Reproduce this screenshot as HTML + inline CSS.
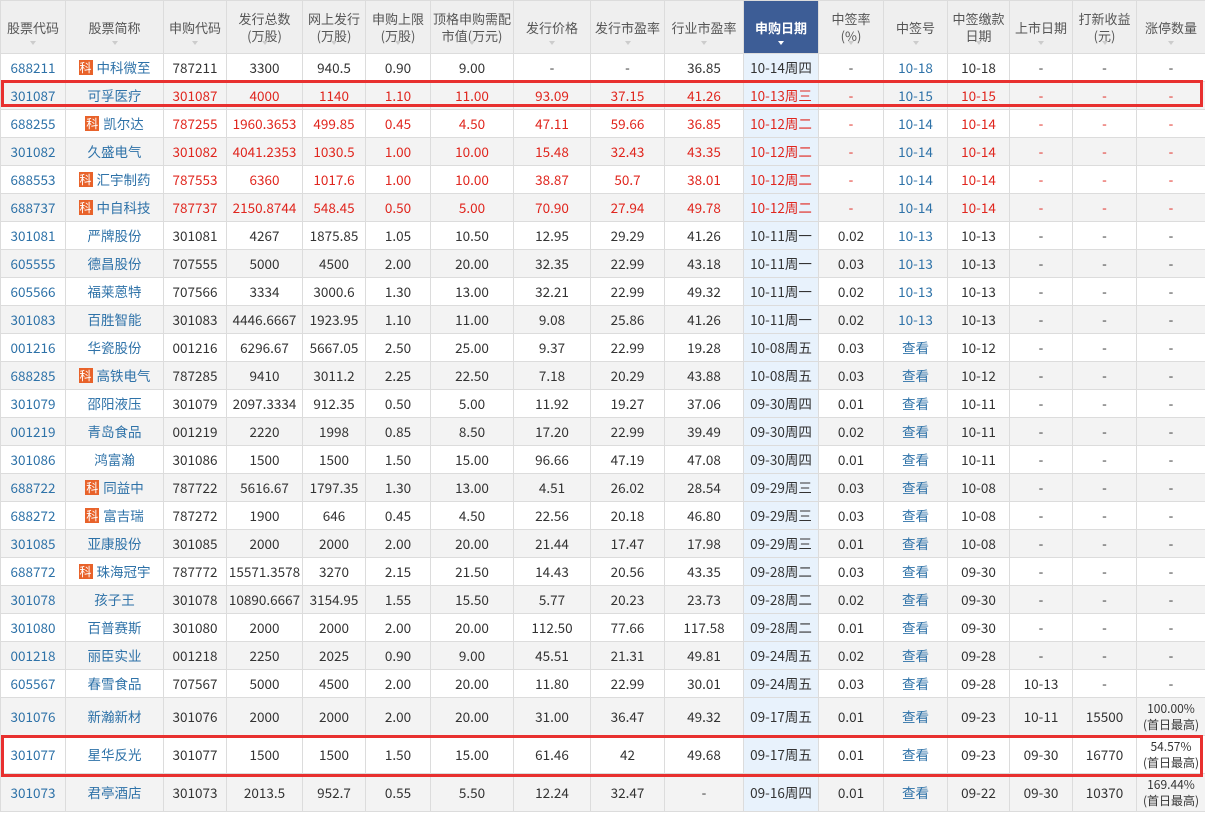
<!DOCTYPE html>
<html><head><meta charset="utf-8"><style>
body{margin:0;background:#fff;font-family:"Noto Sans CJK SC","Liberation Sans",sans-serif;}
table{border-collapse:collapse;table-layout:fixed;width:1205px;font-size:13.5px;color:#333;}
td,th{border:1px solid #dcdcdc;text-align:center;padding:0;white-space:nowrap;overflow:hidden;line-height:18px;vertical-align:middle}
td{padding-bottom:2px}
th{background:#efefef;font-weight:normal;color:#555;height:53px;line-height:17px;position:relative;vertical-align:top;padding-top:9px;box-sizing:border-box;font-size:13px}
th::after{content:"";position:absolute;left:50%;margin-left:-3px;bottom:5px;border:3px solid transparent;border-top:4px solid #ccc;}
th.d{background:#3d5d96;color:#fff;font-weight:bold;}
th.d::after{border-top-color:#fff;}
th.s{padding-top:18px}
tr{height:28px}
tr.t{height:38px}
tr:nth-child(odd) td{background:#f3f3f3}
td.d{background:#e8f2fc!important}
.b{color:#2e72a8}.r{color:#e0261e}
.k{display:inline-block;background:#e8622a;color:#fff;font-size:12px;line-height:15px;width:14px;margin-right:4px;vertical-align:1px}
.box{position:absolute;border:3px solid #e8302f;box-sizing:border-box;}
td.sm{font-size:12px;line-height:16px;padding-bottom:0}
</style></head><body>
<table>
<colgroup><col style="width:65px"><col style="width:98px"><col style="width:63px"><col style="width:76px"><col style="width:63px"><col style="width:65px"><col style="width:83px"><col style="width:77px"><col style="width:74px"><col style="width:79px"><col style="width:75px"><col style="width:65px"><col style="width:64px"><col style="width:62px"><col style="width:63px"><col style="width:64px"><col style="width:69px"></colgroup>
<tr><th class="s">股票代码</th><th class="s">股票简称</th><th class="s">申购代码</th><th>发行总数<br>(万股)</th><th>网上发行<br>(万股)</th><th>申购上限<br>(万股)</th><th>顶格申购需配<br>市值(万元)</th><th class="s">发行价格</th><th class="s">发行市盈率</th><th class="s">行业市盈率</th><th class="d s">申购日期</th><th>中签率<br>(%)</th><th class="s">中签号</th><th>中签缴款<br>日期</th><th class="s">上市日期</th><th>打新收益<br>(元)</th><th class="s">涨停数量</th></tr>
<tr><td class="b">688211</td><td class="b"><span class="k">科</span>中科微至</td><td>787211</td><td>3300</td><td>940.5</td><td>0.90</td><td>9.00</td><td>-</td><td>-</td><td>36.85</td><td class="d">10-14周四</td><td>-</td><td class="b">10-18</td><td>10-18</td><td>-</td><td>-</td><td>-</td></tr>
<tr class="r"><td class="b">301087</td><td class="b">可孚医疗</td><td>301087</td><td>4000</td><td>1140</td><td>1.10</td><td>11.00</td><td>93.09</td><td>37.15</td><td>41.26</td><td class="d">10-13周三</td><td>-</td><td class="b">10-15</td><td>10-15</td><td>-</td><td>-</td><td>-</td></tr>
<tr class="r"><td class="b">688255</td><td class="b"><span class="k">科</span>凯尔达</td><td>787255</td><td>1960.3653</td><td>499.85</td><td>0.45</td><td>4.50</td><td>47.11</td><td>59.66</td><td>36.85</td><td class="d">10-12周二</td><td>-</td><td class="b">10-14</td><td>10-14</td><td>-</td><td>-</td><td>-</td></tr>
<tr class="r"><td class="b">301082</td><td class="b">久盛电气</td><td>301082</td><td>4041.2353</td><td>1030.5</td><td>1.00</td><td>10.00</td><td>15.48</td><td>32.43</td><td>43.35</td><td class="d">10-12周二</td><td>-</td><td class="b">10-14</td><td>10-14</td><td>-</td><td>-</td><td>-</td></tr>
<tr class="r"><td class="b">688553</td><td class="b"><span class="k">科</span>汇宇制药</td><td>787553</td><td>6360</td><td>1017.6</td><td>1.00</td><td>10.00</td><td>38.87</td><td>50.7</td><td>38.01</td><td class="d">10-12周二</td><td>-</td><td class="b">10-14</td><td>10-14</td><td>-</td><td>-</td><td>-</td></tr>
<tr class="r"><td class="b">688737</td><td class="b"><span class="k">科</span>中自科技</td><td>787737</td><td>2150.8744</td><td>548.45</td><td>0.50</td><td>5.00</td><td>70.90</td><td>27.94</td><td>49.78</td><td class="d">10-12周二</td><td>-</td><td class="b">10-14</td><td>10-14</td><td>-</td><td>-</td><td>-</td></tr>
<tr><td class="b">301081</td><td class="b">严牌股份</td><td>301081</td><td>4267</td><td>1875.85</td><td>1.05</td><td>10.50</td><td>12.95</td><td>29.29</td><td>41.26</td><td class="d">10-11周一</td><td>0.02</td><td class="b">10-13</td><td>10-13</td><td>-</td><td>-</td><td>-</td></tr>
<tr><td class="b">605555</td><td class="b">德昌股份</td><td>707555</td><td>5000</td><td>4500</td><td>2.00</td><td>20.00</td><td>32.35</td><td>22.99</td><td>43.18</td><td class="d">10-11周一</td><td>0.03</td><td class="b">10-13</td><td>10-13</td><td>-</td><td>-</td><td>-</td></tr>
<tr><td class="b">605566</td><td class="b">福莱蒽特</td><td>707566</td><td>3334</td><td>3000.6</td><td>1.30</td><td>13.00</td><td>32.21</td><td>22.99</td><td>49.32</td><td class="d">10-11周一</td><td>0.02</td><td class="b">10-13</td><td>10-13</td><td>-</td><td>-</td><td>-</td></tr>
<tr><td class="b">301083</td><td class="b">百胜智能</td><td>301083</td><td>4446.6667</td><td>1923.95</td><td>1.10</td><td>11.00</td><td>9.08</td><td>25.86</td><td>41.26</td><td class="d">10-11周一</td><td>0.02</td><td class="b">10-13</td><td>10-13</td><td>-</td><td>-</td><td>-</td></tr>
<tr><td class="b">001216</td><td class="b">华瓷股份</td><td>001216</td><td>6296.67</td><td>5667.05</td><td>2.50</td><td>25.00</td><td>9.37</td><td>22.99</td><td>19.28</td><td class="d">10-08周五</td><td>0.03</td><td class="b">查看</td><td>10-12</td><td>-</td><td>-</td><td>-</td></tr>
<tr><td class="b">688285</td><td class="b"><span class="k">科</span>高铁电气</td><td>787285</td><td>9410</td><td>3011.2</td><td>2.25</td><td>22.50</td><td>7.18</td><td>20.29</td><td>43.88</td><td class="d">10-08周五</td><td>0.03</td><td class="b">查看</td><td>10-12</td><td>-</td><td>-</td><td>-</td></tr>
<tr><td class="b">301079</td><td class="b">邵阳液压</td><td>301079</td><td>2097.3334</td><td>912.35</td><td>0.50</td><td>5.00</td><td>11.92</td><td>19.27</td><td>37.06</td><td class="d">09-30周四</td><td>0.01</td><td class="b">查看</td><td>10-11</td><td>-</td><td>-</td><td>-</td></tr>
<tr><td class="b">001219</td><td class="b">青岛食品</td><td>001219</td><td>2220</td><td>1998</td><td>0.85</td><td>8.50</td><td>17.20</td><td>22.99</td><td>39.49</td><td class="d">09-30周四</td><td>0.02</td><td class="b">查看</td><td>10-11</td><td>-</td><td>-</td><td>-</td></tr>
<tr><td class="b">301086</td><td class="b">鸿富瀚</td><td>301086</td><td>1500</td><td>1500</td><td>1.50</td><td>15.00</td><td>96.66</td><td>47.19</td><td>47.08</td><td class="d">09-30周四</td><td>0.01</td><td class="b">查看</td><td>10-11</td><td>-</td><td>-</td><td>-</td></tr>
<tr><td class="b">688722</td><td class="b"><span class="k">科</span>同益中</td><td>787722</td><td>5616.67</td><td>1797.35</td><td>1.30</td><td>13.00</td><td>4.51</td><td>26.02</td><td>28.54</td><td class="d">09-29周三</td><td>0.03</td><td class="b">查看</td><td>10-08</td><td>-</td><td>-</td><td>-</td></tr>
<tr><td class="b">688272</td><td class="b"><span class="k">科</span>富吉瑞</td><td>787272</td><td>1900</td><td>646</td><td>0.45</td><td>4.50</td><td>22.56</td><td>20.18</td><td>46.80</td><td class="d">09-29周三</td><td>0.03</td><td class="b">查看</td><td>10-08</td><td>-</td><td>-</td><td>-</td></tr>
<tr><td class="b">301085</td><td class="b">亚康股份</td><td>301085</td><td>2000</td><td>2000</td><td>2.00</td><td>20.00</td><td>21.44</td><td>17.47</td><td>17.98</td><td class="d">09-29周三</td><td>0.01</td><td class="b">查看</td><td>10-08</td><td>-</td><td>-</td><td>-</td></tr>
<tr><td class="b">688772</td><td class="b"><span class="k">科</span>珠海冠宇</td><td>787772</td><td>15571.3578</td><td>3270</td><td>2.15</td><td>21.50</td><td>14.43</td><td>20.56</td><td>43.35</td><td class="d">09-28周二</td><td>0.03</td><td class="b">查看</td><td>09-30</td><td>-</td><td>-</td><td>-</td></tr>
<tr><td class="b">301078</td><td class="b">孩子王</td><td>301078</td><td>10890.6667</td><td>3154.95</td><td>1.55</td><td>15.50</td><td>5.77</td><td>20.23</td><td>23.73</td><td class="d">09-28周二</td><td>0.02</td><td class="b">查看</td><td>09-30</td><td>-</td><td>-</td><td>-</td></tr>
<tr><td class="b">301080</td><td class="b">百普赛斯</td><td>301080</td><td>2000</td><td>2000</td><td>2.00</td><td>20.00</td><td>112.50</td><td>77.66</td><td>117.58</td><td class="d">09-28周二</td><td>0.01</td><td class="b">查看</td><td>09-30</td><td>-</td><td>-</td><td>-</td></tr>
<tr><td class="b">001218</td><td class="b">丽臣实业</td><td>001218</td><td>2250</td><td>2025</td><td>0.90</td><td>9.00</td><td>45.51</td><td>21.31</td><td>49.81</td><td class="d">09-24周五</td><td>0.02</td><td class="b">查看</td><td>09-28</td><td>-</td><td>-</td><td>-</td></tr>
<tr><td class="b">605567</td><td class="b">春雪食品</td><td>707567</td><td>5000</td><td>4500</td><td>2.00</td><td>20.00</td><td>11.80</td><td>22.99</td><td>30.01</td><td class="d">09-24周五</td><td>0.03</td><td class="b">查看</td><td>09-28</td><td>10-13</td><td>-</td><td>-</td></tr>
<tr class="t"><td class="b">301076</td><td class="b">新瀚新材</td><td>301076</td><td>2000</td><td>2000</td><td>2.00</td><td>20.00</td><td>31.00</td><td>36.47</td><td>49.32</td><td class="d">09-17周五</td><td>0.01</td><td class="b">查看</td><td>09-23</td><td>10-11</td><td>15500</td><td class="sm">100.00%<br>(首日最高)</td></tr>
<tr class="t"><td class="b">301077</td><td class="b">星华反光</td><td>301077</td><td>1500</td><td>1500</td><td>1.50</td><td>15.00</td><td>61.46</td><td>42</td><td>49.68</td><td class="d">09-17周五</td><td>0.01</td><td class="b">查看</td><td>09-23</td><td>09-30</td><td>16770</td><td class="sm">54.57%<br>(首日最高)</td></tr>
<tr class="t"><td class="b">301073</td><td class="b">君亭酒店</td><td>301073</td><td>2013.5</td><td>952.7</td><td>0.55</td><td>5.50</td><td>12.24</td><td>32.47</td><td>-</td><td class="d">09-16周四</td><td>0.01</td><td class="b">查看</td><td>09-22</td><td>09-30</td><td>10370</td><td class="sm">169.44%<br>(首日最高)</td></tr>
</table>
<div class="box" style="left:1px;top:80px;width:1202px;height:27px"></div>
<div class="box" style="left:1px;top:735px;width:1202px;height:42px"></div>
</body></html>
